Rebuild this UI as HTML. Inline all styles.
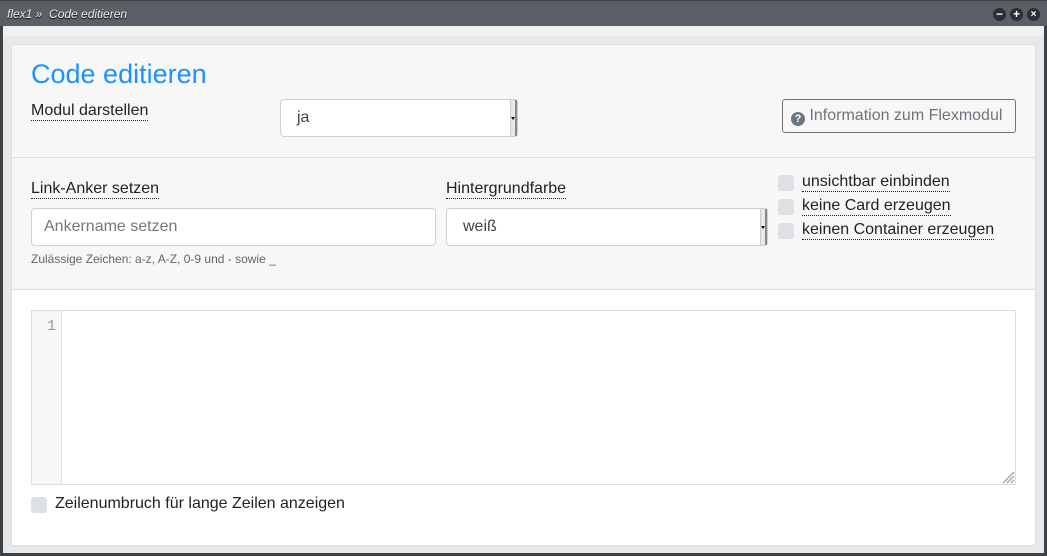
<!DOCTYPE html>
<html><head><meta charset="utf-8"><style>
*{box-sizing:border-box;margin:0;padding:0}
body{width:1047px;height:556px;overflow:hidden;background:#3d4247;font-family:"Liberation Sans",sans-serif;position:relative}
.a{position:absolute}
.title{left:0;top:0;width:1047px;height:26px;background:#5a6066;border-top:1px solid #3d4247}
.title span{position:absolute;left:7px;top:6px;font-size:12px;font-style:italic;color:#f0f0f0;text-shadow:0 1px 1px #000}
.btn{width:13px;height:13px;border-radius:50%;background:#2b2f33;color:#fff;font-size:12px;line-height:13px;text-align:center;font-weight:bold;top:8px}
.inner{left:3px;top:26px;width:1041px;height:527px;background:#e8e8e8}
.strip{left:3px;top:26px;width:1041px;height:10px;background:#f0f0f0}
.card{left:11px;top:44px;width:1025px;height:502px;background:#fff;border:1px solid #ddd;border-radius:3px;overflow:hidden}
.hd{left:0;top:0;width:1023px;height:245px;background:#f7f7f7;border-bottom:1px solid #ddd}
.sep{left:0;top:112px;width:1023px;height:1px;background:#ddd}
.lbl{font-size:16px;color:#222;border-bottom:1px dotted #222;line-height:18px}
.inp{background:#fff;border:1px solid #ccd0d5;border-radius:4px;font-size:16px;color:#444;padding-left:16px}
.arr{position:absolute;right:0;top:0;width:7px;height:100%;background:#e8e8e8;border-left:1px solid #ccc;border-right:2px solid #888}
.arr:after{content:"";position:absolute;left:0px;top:50%;border:2.5px solid transparent;border-top:3px solid #000;margin-top:-1px}
.cb{width:16px;height:16px;background:#dde0e4;border-radius:3px}
.cbl{font-size:16px;color:#222;border-bottom:1px dotted #222;line-height:18px}
</style></head><body>
<div class="a title"><span>flex1 »&nbsp; Code editieren</span></div>
<div class="a btn" style="left:993px">−</div>
<div class="a btn" style="left:1010px">+</div>
<div class="a btn" style="left:1027px;font-size:10px">×</div>
<div class="a inner"></div>
<div class="a strip"></div>
<div class="a card">
 <div class="a hd"></div>
 <div class="a sep"></div>
 <div class="a" style="left:19px;top:14px;font-size:27px;color:#1e90ff">Code editieren</div>
 <div class="a lbl" style="left:19px;top:57px">Modul darstellen</div>
 <div class="a inp" style="left:268px;top:54px;width:238px;height:38px;line-height:36px">ja<div class="arr"></div></div>
 <div class="a" style="left:770px;top:54px;width:234px;height:34px;border:1px solid #6c757d;border-radius:3px;font-size:16px;color:#6c757d;line-height:32px;padding-left:8px;white-space:nowrap"><span style="display:inline-block;width:14px;height:14px;border-radius:50%;background:#6c757d;color:#fff;font-size:11px;line-height:14px;text-align:center;font-weight:bold;vertical-align:-2px">?</span> Information zum Flexmodul</div>
 <div class="a lbl" style="left:19px;top:135px">Link-Anker setzen</div>
 <div class="a inp" style="left:19px;top:163px;width:405px;height:38px;line-height:36px;color:#777;padding-left:12px">Ankername setzen</div>
 <div class="a" style="left:19px;top:207px;font-size:12px;color:#666">Zulässige Zeichen: a-z, A-Z, 0-9 und - sowie _</div>
 <div class="a lbl" style="left:434px;top:135px">Hintergrundfarbe</div>
 <div class="a inp" style="left:434px;top:163px;width:322px;height:38px;line-height:36px">weiß<div class="arr"></div></div>
 <div class="a cb" style="left:766px;top:130px"></div><div class="a cbl" style="left:790px;top:128px">unsichtbar einbinden</div>
 <div class="a cb" style="left:766px;top:154px"></div><div class="a cbl" style="left:790px;top:152px">keine Card erzeugen</div>
 <div class="a cb" style="left:766px;top:178px"></div><div class="a cbl" style="left:790px;top:176px">keinen Container erzeugen</div>
 <div class="a" style="left:19px;top:265px;width:985px;height:175px;border:1px solid #ddd;background:#fff">
  <div class="a" style="left:0;top:0;width:30px;height:173px;background:#f7f7f7;border-right:1px solid #ddd;font-family:'Liberation Mono',monospace;font-size:15px;color:#999;text-align:right;padding:7px 5px 0 0">1</div>
  <svg class="a" style="right:0;bottom:0" width="14" height="14"><path d="M13 2L2 13M13 6L6 13M13 10L10 13" stroke="#aaa" stroke-width="1.5"/></svg>
 </div>
 <div class="a cb" style="left:19px;top:452px"></div>
 <div class="a" style="left:43px;top:450px;font-size:16px;color:#222">Zeilenumbruch für lange Zeilen anzeigen</div>
</div>
</body></html>
